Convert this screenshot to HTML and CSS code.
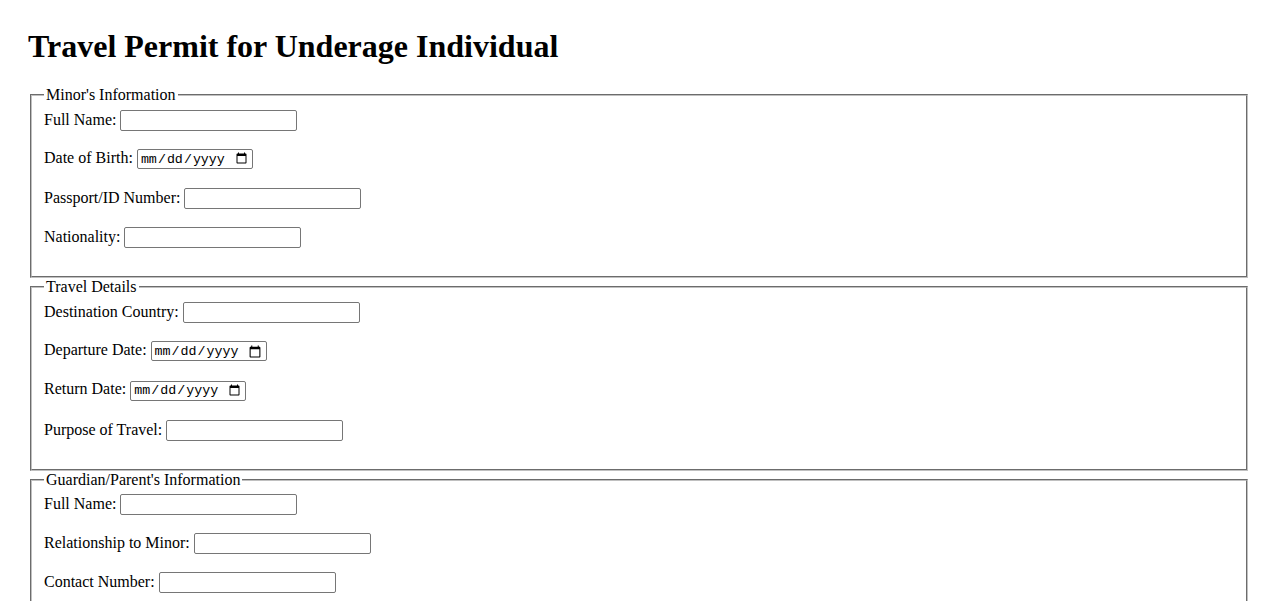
FILE: index.html
```html
<!DOCTYPE html>
<html lang="en">
<head>
<meta charset="utf-8">
<title>Travel Permit for Underage Individual</title>
<link rel="stylesheet" href="styles.css">
</head>
<body class="page">
<h1 class="title">Travel Permit for Underage Individual</h1>
<form class="permit-form">
  <fieldset class="section">
    <legend class="section-title">Minor's Information</legend>
    <label class="field-label" for="minorName">Full Name:</label>
    <input class="text-input" type="text" id="minorName"><br><br>
    <label class="field-label" for="dob">Date of Birth:</label>
    <input class="date-input" type="date" id="dob"><br><br>
    <label class="field-label" for="passport">Passport/ID Number:</label>
    <input class="text-input" type="text" id="passport"><br><br>
    <label class="field-label" for="nationality">Nationality:</label>
    <input class="text-input" type="text" id="nationality"><br><br>
  </fieldset>
  <fieldset class="section">
    <legend class="section-title">Travel Details</legend>
    <label class="field-label" for="destination">Destination Country:</label>
    <input class="text-input" type="text" id="destination"><br><br>
    <label class="field-label" for="departure">Departure Date:</label>
    <input class="date-input" type="date" id="departure"><br><br>
    <label class="field-label" for="return">Return Date:</label>
    <input class="date-input" type="date" id="return"><br><br>
    <label class="field-label" for="purpose">Purpose of Travel:</label>
    <input class="text-input" type="text" id="purpose"><br><br>
  </fieldset>
  <fieldset class="section">
    <legend class="section-title">Guardian/Parent's Information</legend>
    <label class="field-label" for="guardianName">Full Name:</label>
    <input class="text-input" type="text" id="guardianName"><br><br>
    <label class="field-label" for="relationship">Relationship to Minor:</label>
    <input class="text-input" type="text" id="relationship"><br><br>
    <label class="field-label" for="contact">Contact Number:</label>
    <input class="text-input" type="text" id="contact"><br><br>
    <label class="field-label" for="address">Address:</label>
    <input class="text-input" type="text" id="address"><br><br>
  </fieldset>
</form>
</body>
</html>
```

FILE: styles.css
```css
.page {
  margin: 28px;
  font-family: "Liberation Serif", "Times New Roman", serif;
  font-size: 16px;
  color: #000;
  background: #fff;
}

.title {
  font-size: 32px;
  font-weight: bold;
  margin: 0 0 21px;
}

.section {
  margin: 0 2px;
  padding: 5.6px 12px 10px;
  border: 2px groove #c0c0c0;
}

.section-title {
  padding: 0 2px;
}

.text-input,
.date-input {
  box-sizing: border-box;
  height: 21px;
  border: 1px solid #767676;
  border-radius: 2px;
  padding: 1px 2px;
  font-size: 13.33px;
  vertical-align: baseline;
}

.text-input {
  width: 177px;
}

.date-input {
  width: 116px;
  height: 20px;
  margin-bottom: 1px;
  font-family: "Liberation Mono", "DejaVu Sans Mono", monospace;
}
```
